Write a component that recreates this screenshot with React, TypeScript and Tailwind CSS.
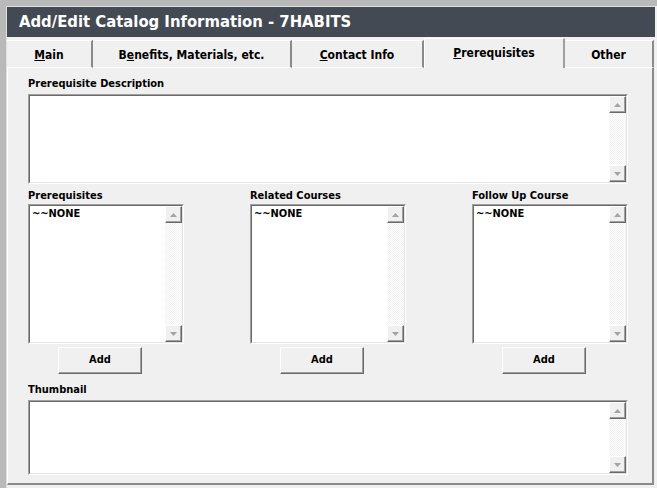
import React from 'react';

const font = { fontFamily: '"DejaVu Sans Condensed", "DejaVu Sans", sans-serif', fontStretch: 'condensed' as const };

function Arrow({ down }: { down?: boolean }) {
  return (
    <svg width="7" height="4" viewBox="0 0 7 4" className="block">
      {down ? <polygon points="0,0 7,0 3.5,4" fill="#a3a3a3" /> : <polygon points="0,4 7,4 3.5,0" fill="#a3a3a3" />}
    </svg>
  );
}

function ScrollBtn({ down }: { down?: boolean }) {
  return (
    <div className="h-[17px] w-[17px] border-t border-l border-white border-r border-b border-r-[#696969] border-b-[#696969] bg-[#f0f0f0] flex items-center justify-center shadow-[inset_-1px_-1px_0_#a0a0a0]">
      <Arrow down={down} />
    </div>
  );
}

function Box({ className, children }: { className: string; children?: React.ReactNode }) {
  return (
    <div className={`border border-t-[#a0a0a0] border-l-[#a0a0a0] border-b-white border-r-white ${className}`}>
      <div className="h-full border border-t-[#696969] border-l-[#696969] border-b-[#e3e3e3] border-r-[#e3e3e3] bg-white flex">
        <div className="flex-1 pl-[2px] pt-px text-[11px] font-bold text-black leading-[14px]">{children}</div>
        <div className="w-[17px] flex flex-col">
          <ScrollBtn />
          <div className="flex-1 bg-[repeating-conic-gradient(#ffffff_0_25%,#f1f1f1_0_50%)] bg-[length:2px_2px]" />
          <ScrollBtn down />
        </div>
      </div>
    </div>
  );
}

function AddButton() {
  return (
    <button className="ml-[30px] mt-[3px] w-[84px] h-[27px] border border-t-white border-l-white border-b-[#696969] border-r-[#696969] shadow-[inset_-1px_-1px_0_#a0a0a0] bg-[#f0f0f0] text-[11px] font-bold text-black">
      Add
    </button>
  );
}

function ListCol({ label }: { label: string }) {
  return (
    <div className="w-[156px] flex flex-col">
      <div className="text-[11px] font-bold leading-[14px] h-[14px] mb-[1px]">{label}</div>
      <Box className="h-[140px] w-[156px]">~~NONE</Box>
      <AddButton />
    </div>
  );
}

const tabs = [
  { w: 86, label: <><u>M</u>ain</> },
  { w: 199, label: <>B<u>e</u>nefits, Materials, etc.</> },
  { w: 132, label: <><u>C</u>ontact Info</> },
  { w: 141, label: <><u>P</u>rerequisites</>, active: true },
  { w: 89, label: <>Other</> },
];

export default function App() {
  return (
    <div className="w-[657px] h-[488px] bg-[#f0f0f0] overflow-hidden text-black" style={font}>
      <div className="h-full border-l-[6px] border-t-[6px] border-[#b9b9b9]">
        <div className="h-full border-l border-t border-[#dedede] flex flex-col w-[649px]">
          <div className="h-[30px] bg-[#434a53] text-white text-[16.5px] font-bold pl-[12px] flex items-center">
            Add/Edit Catalog Information - 7HABITS
          </div>
          <div className="h-[31px] flex items-end">
            {tabs.map((t, i) =>
              t.active ? (
                <div
                  key={i}
                  style={{ width: t.w }}
                  className="h-[30px] border-t border-l border-white border-r-2 border-r-[#a0a0a0] bg-[#f0f0f0] flex items-start justify-center pt-[5px] text-[12px] font-bold"
                >
                  <span>{t.label}</span>
                </div>
              ) : (
                <div
                  key={i}
                  style={{ width: t.w }}
                  className="h-[28px] border-t border-b border-white border-r-2 border-r-[#8a8a8a] bg-[#f0f0f0] flex items-center justify-center pt-[2px] text-[12px] font-bold"
                >
                  <span>{t.label}</span>
                </div>
              )
            )}
          </div>
          <div className="h-[417px] w-[647px] border-l border-white border-r-2 border-b-2 border-r-[#8a8a8a] border-b-[#8a8a8a] pl-[20px] pt-[9px]">
            <div className="text-[11px] font-bold leading-[14px] h-[14px] mb-[3px]">Prerequisite Description</div>
            <Box className="h-[90px] w-[600px]" />
            <div className="flex gap-[66px] mt-[5px]">
              <ListCol label="Prerequisites" />
              <ListCol label="Related Courses" />
              <ListCol label="Follow Up Course" />
            </div>
            <div className="text-[11px] font-bold leading-[14px] h-[14px] mt-[9px] mb-[3px]">Thumbnail</div>
            <Box className="h-[75px] w-[600px]" />
          </div>
        </div>
      </div>
    </div>
  );
}
